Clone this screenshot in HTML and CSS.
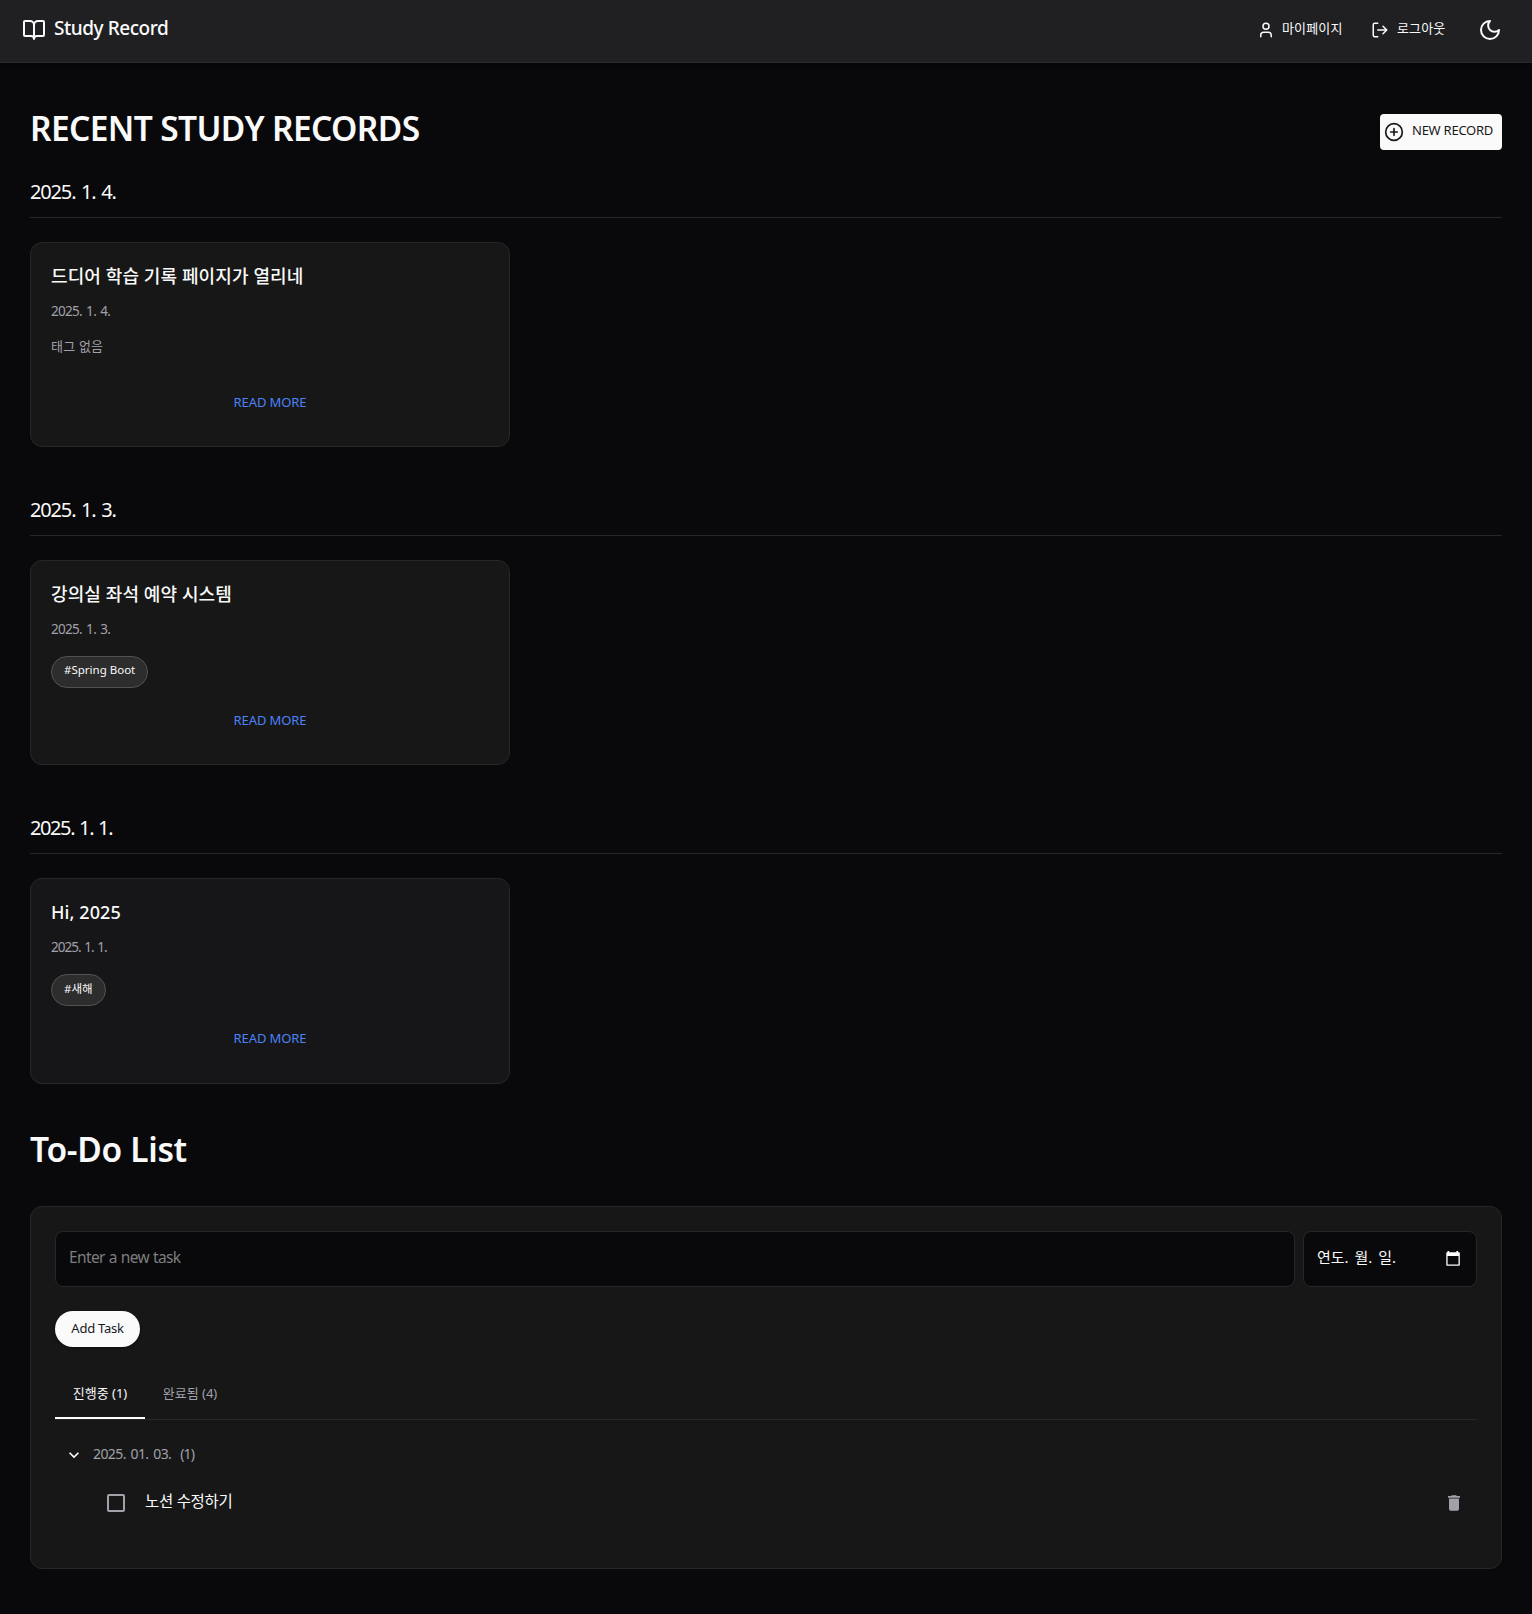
FILE: index.html
```html
<!DOCTYPE html>
<html lang="ko">
<head>
<meta charset="utf-8">
<title>Study Record</title>
<link rel="stylesheet" href="styles.css">
</head>
<body>
<header class="topbar">
  <a class="brand">
    <svg class="icon" width="24" height="24" viewBox="0 0 24 24"><path d="M12 7v14M3 18a1 1 0 0 1-1-1V4a1 1 0 0 1 1-1h5a4 4 0 0 1 4 4 4 4 0 0 1 4-4h5a1 1 0 0 1 1 1v13a1 1 0 0 1-1 1h-6a3 3 0 0 0-3 3 3 3 0 0 0-3-3z"/></svg>
    <span class="brand-name">Study Record</span>
  </a>
  <nav class="nav">
    <a class="nav-link mypage">
      <svg class="icon" width="18" height="18" viewBox="0 0 24 24"><path d="M19 21v-2a4 4 0 0 0-4-4H9a4 4 0 0 0-4 4v2"/><circle cx="12" cy="7" r="4"/></svg>
      <span>마이페이지</span>
    </a>
    <a class="nav-link logout">
      <svg class="icon" width="18" height="18" viewBox="0 0 24 24"><path d="M9 21H5a2 2 0 0 1-2-2V5a2 2 0 0 1 2-2h4M16 17l5-5-5-5M21 12H9"/></svg>
      <span>로그아웃</span>
    </a>
    <a class="theme">
      <svg class="icon" width="24" height="24" viewBox="0 0 24 24"><path d="M12 3a6 6 0 0 0 9 9 9 9 0 1 1-9-9Z"/></svg>
    </a>
  </nav>
</header>
<main class="page">
  <div class="page-head">
    <h1 class="page-title">RECENT STUDY RECORDS</h1>
    <button class="new-record">
      <svg class="icon" width="20" height="20" viewBox="0 0 24 24"><circle cx="12" cy="12" r="10"/><path d="M8 12h8M12 8v8"/></svg>
      <span>NEW RECORD</span>
    </button>
  </div>
  <section class="day first">
    <h2 class="day-title">2025. 1. 4.</h2>
    <article class="card">
      <h3 class="card-title">드디어 학습 기록 페이지가 열리네</h3>
      <p class="card-date">2025. 1. 4.</p>
      <div class="tags"><span class="no-tag">태그 없음</span></div>
      <a class="more">READ MORE</a>
    </article>
  </section>
  <section class="day">
    <h2 class="day-title">2025. 1. 3.</h2>
    <article class="card">
      <h3 class="card-title">강의실 좌석 예약 시스템</h3>
      <p class="card-date">2025. 1. 3.</p>
      <div class="tags"><span class="tag tag-en">#Spring Boot</span></div>
      <a class="more">READ MORE</a>
    </article>
  </section>
  <section class="day newyear">
    <h2 class="day-title">2025. 1. 1.</h2>
    <article class="card tall">
      <h3 class="card-title">Hi, 2025</h3>
      <p class="card-date">2025. 1. 1.</p>
      <div class="tags"><span class="tag">#새해</span></div>
      <a class="more">READ MORE</a>
    </article>
  </section>
  <h2 class="todo-title">To-Do List</h2>
  <section class="panel">
    <div class="fields">
      <div class="field task-field"><span class="placeholder">Enter a new task</span></div>
      <div class="field date-field">
        <span class="date-value">연도. 월. 일.</span>
        <svg class="calendar" width="14" height="15" viewBox="0 0 14 15"><path fill-rule="evenodd" d="M1.5 0h1.7v1.3h7.2V0h1.7v1.3H13a.8.8 0 0 1 .8.8V14a.8.8 0 0 1-.8.8H1.100a.8.8 0 0 1-.8-.8V2.100a.8.8 0 0 1 .8-.8h.4zM1.600 4.900v8.600h10.900V4.900z"/></svg>
      </div>
    </div>
    <button class="add">Add Task</button>
    <div class="tabs">
      <span class="tab active">진행중 (1)</span>
      <span class="tab done">완료됨 (4)</span>
    </div>
    <div class="group">
      <svg class="chevron" width="20" height="20" viewBox="0 0 24 24"><path d="M7.410 8.590 12 13.170l4.590-4.580L18 10l-6 6-6-6z"/></svg>
      <span class="group-date">2025. 01. 03.</span>
      <span class="group-count">(1)</span>
    </div>
    <div class="task">
      <span class="checkbox"></span>
      <span class="task-name">노션 수정하기</span>
      <svg class="trash" width="12" height="16" viewBox="0 0 12 16"><path d="M1 3.600h10V14a1.700 1.700 0 0 1-1.700 1.700H2.700A1.700 1.700 0 0 1 1 14zM0 1.100h3L4 .2h4l1 .9h3v1.700H0z"/></svg>
    </div>
  </section>
</main>
</body>
</html>
```
FILE: styles.css
```css
* { box-sizing: border-box; }
body {
  margin: 0;
  background: #09090b;
  color: #fafafa;
  font-family: "Noto Sans", "Noto Sans CJK KR", sans-serif;
  min-height: 1614px;
}
h1, h2, h3, p { margin: 0; }
button { border: 0; font-family: inherit; }
svg { display: block; flex: none; }
.icon { fill: none; stroke: currentColor; stroke-width: 2; stroke-linecap: round; stroke-linejoin: round; }
.topbar {
  height: 63px;
  padding: 18px 30px 0 22px;
  display: flex;
  justify-content: space-between;
  align-items: flex-start;
  background: #202022;
  border-bottom: 1px solid #2a2a2d;
  box-shadow: 0 2px 4px rgba(0, 0, 0, .4);
}
.brand { display: flex; gap: 8px; }
.brand-name { font-size: 19px; line-height: 21px; font-weight: 500; letter-spacing: -.45px; white-space: nowrap; }
.nav { display: flex; }
.nav-link { display: flex; align-items: center; height: 24px; font-size: 13px; white-space: nowrap; }
.nav-link span { line-height: 20px; padding-bottom: 4px; letter-spacing: .15px; }
.mypage { width: 114px; gap: 7px; }
.logout { width: 107px; gap: 8px; }
.page { padding: 48px 30px 0; }
.page-head { display: flex; justify-content: space-between; height: 39px; }
.page-title { font-size: 33.500px; line-height: 34px; font-weight: 600; letter-spacing: -.63px; white-space: nowrap; }
.new-record {
  align-self: flex-end;
  width: 122px;
  height: 36px;
  padding: 0 0 0 4px;
  display: flex;
  align-items: center;
  gap: 8px;
  border-radius: 4px;
  background: #fafafa;
  color: #18181b;
  font-size: 13px;
  letter-spacing: -.25px;
  white-space: nowrap;
}
.new-record span { padding-bottom: 4px; }
.day { padding-top: 50px; }
.day.first { padding-top: 29px; }
.day-title {
  padding: 1px 0 13px;
  border-bottom: 1px solid #27272a;
  font-size: 20px;
  line-height: 24px;
  font-weight: 400;
  letter-spacing: -1.15px;
  word-spacing: 1.6px;
}
.card {
  width: 480px;
  height: 205px;
  margin-top: 24px;
  padding: 21px 20px 0;
  display: flex;
  flex-direction: column;
  border: 1px solid #27272a;
  border-radius: 12px;
  background: #171717;
}
.card.tall { height: 206px; background: #161618; }
.card-title { font-size: 18px; line-height: 24px; font-weight: 500; letter-spacing: .1px; white-space: nowrap; }
.card-date { margin-top: 13px; font-size: 13.500px; line-height: 20px; letter-spacing: -.7px; word-spacing: 1.3px; color: #a1a1aa; }
.newyear .day-title { letter-spacing: -1.4px; word-spacing: 1.2px; }
.newyear .card-date { letter-spacing: -.95px; word-spacing: 1px; }
.tags { display: flex; height: 32px; margin-top: 17px; }
.no-tag { font-size: 13px; line-height: 16px; letter-spacing: .2px; color: #a1a1aa; }
.tag {
  padding: 0 12px;
  border: 1px solid #525252;
  border-radius: 16px;
  background: #2d2d2d;
  font-size: 11.500px;
  line-height: 27px;
  white-space: nowrap;
}
.tag-en { line-height: 25px; }
.more { align-self: center; margin-top: 22px; font-size: 13px; line-height: 20px; letter-spacing: -.1px; color: #4c82f7; white-space: nowrap; }
.todo-title { padding-top: 45px; font-size: 33.500px; line-height: 40px; font-weight: 600; letter-spacing: -.3px; }
.panel {
  height: 363px;
  margin-top: 37px;
  padding: 24px;
  border: 1px solid #27272a;
  border-radius: 12px;
  background: #171717;
}
.fields { display: grid; grid-template-columns: 1fr 174px; gap: 8px; }
.field {
  height: 56px;
  padding: 0 16px 0 13px;
  display: flex;
  align-items: center;
  justify-content: space-between;
  border: 1px solid #27272a;
  border-radius: 8px;
  background: #09090b;
}
.placeholder { padding-bottom: 4px; font-size: 15.500px; line-height: 20px; letter-spacing: -.62px; word-spacing: .5px; color: #7d7d7f; }
.date-value { padding-bottom: 4px; font-size: 15px; line-height: 20px; word-spacing: 2px; white-space: nowrap; }
.calendar { fill: #fff; margin-top: -1px; }
.add {
  display: block;
  width: 85px;
  height: 36px;
  margin-top: 24px;
  padding: 0 0 2px;
  border-radius: 18px;
  background: #fafafa;
  color: #18181b;
  font-size: 13px;
  letter-spacing: -.25px;
  box-shadow: 0 1px 3px rgba(0, 0, 0, .5);
}
.tabs { display: flex; height: 49px; margin-top: 24px; border-bottom: 1px solid #27272a; }
.tab { width: 90px; height: 48px; text-align: center; font-size: 13px; line-height: 45px; white-space: nowrap; color: #a1a1aa; }
.tab.active { border-bottom: 2px solid #fff; color: #fafafa; }
.group { display: flex; align-items: center; height: 36px; margin-top: 16px; padding-left: 9px; color: #a1a1aa; font-size: 14px; line-height: 20px; letter-spacing: -.6px; word-spacing: 1.700px; }
.chevron { fill: #fff; margin-top: 1px; }
.group-date { margin-left: 9px; }
.group-count { margin-left: 9px; letter-spacing: -.8px; }
.task { display: flex; align-items: center; height: 36px; margin-top: 13px; padding: 0 17px 0 52px; }
.checkbox { width: 18px; height: 18px; border: 2px solid #a1a1aa; border-radius: 2px; }
.task-name { flex: 1; margin-left: 20px; padding-bottom: 4px; font-size: 15.500px; line-height: 20px; letter-spacing: -.3px; }
.trash { fill: #a1a1aa; }
```
